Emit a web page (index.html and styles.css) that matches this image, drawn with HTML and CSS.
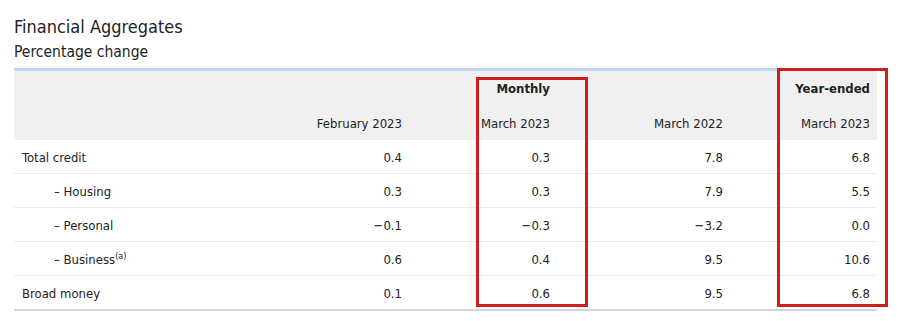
FILE: index.html
```html
<!DOCTYPE html>
<html>
<head>
<meta charset="utf-8">
<link rel="stylesheet" href="styles.css">
</head>
<body>
<div class="page">
  <h1 class="title">Financial Aggregates</h1>
  <div class="subtitle">Percentage change</div>
  <div class="table-wrap">
    <table class="agg">
      <colgroup>
        <col class="c0"><col class="c1"><col class="c2"><col class="c3"><col class="c4">
      </colgroup>
      <thead>
        <tr class="hrow hrow-top">
          <th></th><th></th><th class="grp">Monthly</th><th></th><th class="grp">Year-ended</th>
        </tr>
        <tr class="hrow hrow-bottom">
          <th></th><th>February 2023</th><th>March 2023</th><th>March 2022</th><th>March 2023</th>
        </tr>
      </thead>
      <tbody>
        <tr><td class="lbl">Total credit</td><td>0.4</td><td>0.3</td><td>7.8</td><td>6.8</td></tr>
        <tr><td class="lbl sub">– Housing</td><td>0.3</td><td>0.3</td><td>7.9</td><td>5.5</td></tr>
        <tr><td class="lbl sub">– Personal</td><td>−0.1</td><td>−0.3</td><td>−3.2</td><td>0.0</td></tr>
        <tr><td class="lbl sub">– Business<sup>(a)</sup></td><td>0.6</td><td>0.4</td><td>9.5</td><td>10.6</td></tr>
        <tr><td class="lbl">Broad money</td><td>0.1</td><td>0.6</td><td>9.5</td><td>6.8</td></tr>
      </tbody>
    </table>
    <div class="mark mark-monthly"></div>
    <div class="mark mark-year"></div>
  </div>
</div>
</body>
</html>
```
FILE: styles.css
```css
html, body {
  margin: 0;
  padding: 0;
  background: #fff;
}
body {
  font-family: "DejaVu Sans Condensed", "DejaVu Sans", sans-serif;
  color: #222;
}
.page {
  padding: 15px 23px 0 14px;
}
.title {
  margin: 0;
  font-weight: normal;
  font-size: 18px;
  line-height: 24px;
  color: #222;
}
.subtitle {
  font-size: 15.5px;
  line-height: 22px;
  margin-top: 2px;
}
.table-wrap {
  position: relative;
  margin-top: 5px;
}
.agg {
  width: 863px;
  border-collapse: collapse;
  table-layout: fixed;
  font-size: 13px;
  border-top: 3px solid #c2d8ef;
  border-bottom: 2px solid #d6d6d6;
}
.c0 { width: 248px; }
.c1 { width: 147px; }
.c2 { width: 148px; }
.c3 { width: 173px; }
.c4 { width: 147px; }
.agg thead {
  background: #f0f0f0;
}
.agg th {
  padding: 0 7px 0 0;
  text-align: right;
  font-weight: normal;
  vertical-align: middle;
}
.hrow-top th {
  height: 34px;
}
.hrow-bottom th {
  height: 34px;
  padding-top: 1px;
}
.agg th.grp {
  font-weight: bold;
}
.agg td {
  height: 31px;
  padding: 2px 7px 0 0;
  text-align: right;
  vertical-align: middle;
  border-bottom: 1px solid #ececec;
}
.agg tbody tr:last-child td {
  border-bottom: none;
}
.agg td.lbl {
  text-align: left;
  padding-left: 8px;
}
.agg td.sub {
  padding-left: 40px;
}
.agg sup {
  font-size: 9px;
  line-height: 0;
}
.mark {
  position: absolute;
  border: 3px solid #cc1f1f;
  box-sizing: border-box;
}
.mark-monthly {
  left: 462px;
  top: 9px;
  width: 112px;
  height: 230px;
}
.mark-year {
  left: 763px;
  top: 0;
  width: 111px;
  height: 239px;
}
```
